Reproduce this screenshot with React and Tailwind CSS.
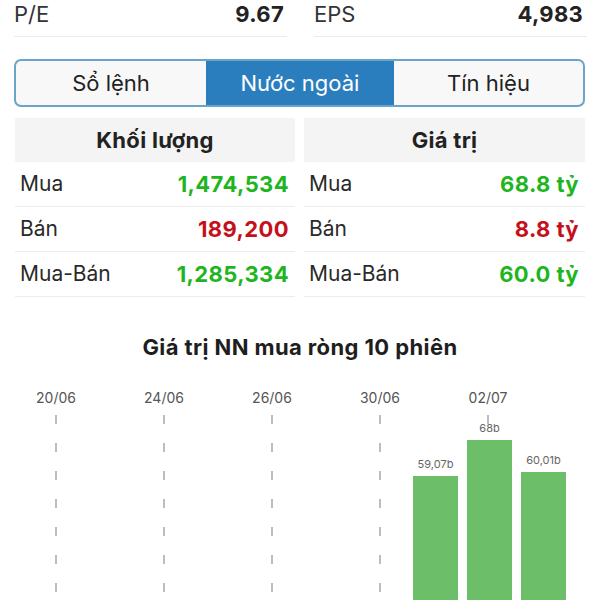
import React from "react";

const rowsKL = [
  { label: "Mua", value: "1,474,534", color: "text-[#1fb51f]" },
  { label: "Bán", value: "189,200", color: "text-[#c5101c]" },
  { label: "Mua-Bán", value: "1,285,334", color: "text-[#1fb51f]" },
];
const rowsGT = [
  { label: "Mua", value: "68.8 tỷ", color: "text-[#1fb51f]" },
  { label: "Bán", value: "8.8 tỷ", color: "text-[#c5101c]" },
  { label: "Mua-Bán", value: "60.0 tỷ", color: "text-[#1fb51f]" },
];

function Table({ title, rows, className }) {
  return (
    <div className={className}>
      <div className="h-[44px] bg-[#f4f4f4] flex items-center justify-center font-bold text-[22px] tracking-[0.3px] text-[#222]">
        {title}
      </div>
      {rows.map((r) => (
        <div
          key={r.label}
          className="h-[45px] border-b border-[#ececec] flex items-center justify-between pl-[5px] pr-[6px]"
        >
          <span className="text-[21px] text-[#2a2a2a]">{r.label}</span>
          <span className={`text-[22px] tracking-[0.4px] font-bold ${r.color}`}>{r.value}</span>
        </div>
      ))}
    </div>
  );
}

function Chart() {
  const dates = [
    { x: 56, t: "20/06" },
    { x: 164, t: "24/06" },
    { x: 272, t: "26/06" },
    { x: 380, t: "30/06" },
    { x: 488, t: "02/07" },
  ];
  const bars = [
    { x: 413, top: 115, label: "59,07b", ly: 107 },
    { x: 467, top: 79, label: "68b", ly: 71 },
    { x: 521, top: 111, label: "60,01b", ly: 103 },
  ];
  return (
    <svg width="600" height="239" viewBox="0 0 600 239" className="block">
      {dates.map((d) => (
        <g key={d.t}>
          <text
            x={d.x}
            y="42"
            textAnchor="middle"
            fontSize="14"
            fill="#555"
            fontFamily="Inter, sans-serif"
          >
            {d.t}
          </text>
          <line
            x1={d.x}
            x2={d.x}
            y1="54"
            y2="239"
            stroke="#bdbdbd"
            strokeWidth="2"
            strokeDasharray="9 19"
          />
        </g>
      ))}
      {bars.map((b) => (
        <g key={b.label}>
          <rect x={b.x} y={b.top} width="45" height={239 - b.top} fill="#6cbe69" />
          <text
            x={b.x + 22.5}
            y={b.ly}
            textAnchor="middle"
            fontSize="11"
            fill="#666"
            fontFamily="Inter, sans-serif"
          >
            {b.label}
          </text>
        </g>
      ))}
    </svg>
  );
}

export default function App() {
  return (
    <div className="w-[600px] h-[600px] overflow-hidden bg-white font-['Inter',sans-serif] text-[#222]">
      <div className="flex pl-[14px] gap-[27px]">
        <div className="w-[273px] h-[37px] border-b border-[#ececec] flex justify-between items-start pr-[3px]">
          <span className="text-[22px] leading-[28px] text-[#333]">P/E</span>
          <span className="text-[22px] leading-[28px] tracking-[0.3px] font-bold text-[#222]">9.67</span>
        </div>
        <div className="w-[273px] h-[37px] border-b border-[#ececec] flex justify-between items-start pr-[4px]">
          <span className="text-[22px] leading-[28px] text-[#333]">EPS</span>
          <span className="text-[22px] leading-[28px] tracking-[0.3px] font-bold text-[#222]">4,983</span>
        </div>
      </div>

      <div className="mt-[22px] ml-[14px] w-[571px] h-[48px] rounded-[7px] border-2 border-[#6aa5c9] overflow-hidden grid grid-cols-[190px_188px_1fr] bg-[#f8f8f8]">
        <div className="flex items-center justify-center text-[22px] text-[#222]">Sổ lệnh</div>
        <div className="flex items-center justify-center text-[22px] text-white bg-[#2b7ebe]">Nước ngoài</div>
        <div className="flex items-center justify-center text-[22px] text-[#222]">Tín hiệu</div>
      </div>

      <div className="mt-[11px] flex pl-[15px] gap-[9px]">
        <Table title="Khối lượng" rows={rowsKL} className="w-[280px]" />
        <Table title="Giá trị" rows={rowsGT} className="w-[281px]" />
      </div>

      <div className="mt-[36px] h-[28px] leading-[28px] text-center font-bold text-[22px] tracking-[0.4px] text-[#1e1e1e]">
        Giá trị NN mua ròng 10 phiên
      </div>
      <Chart />
    </div>
  );
}
